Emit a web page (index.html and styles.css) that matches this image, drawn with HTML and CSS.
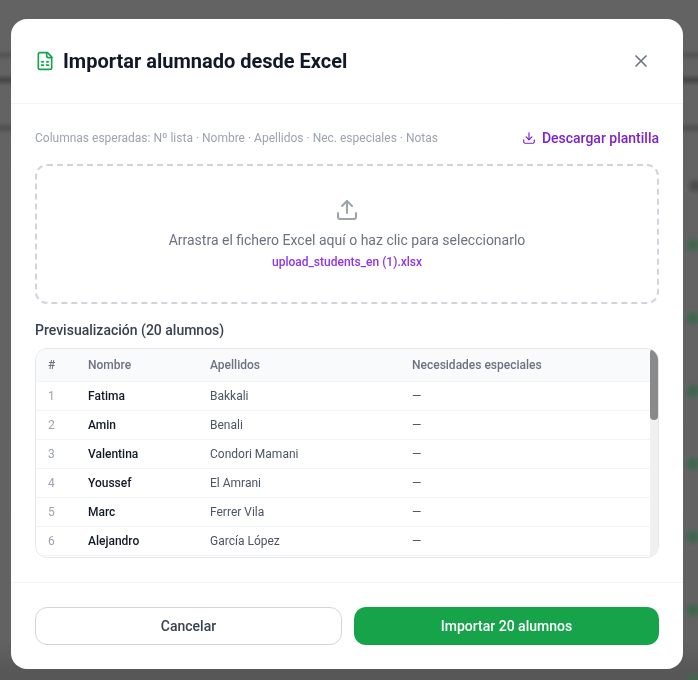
FILE: index.html
```html
<!DOCTYPE html>
<html lang="es">
<head>
    <meta charset="UTF-8">
    <meta name="viewport" content="width=device-width, initial-scale=1.0">
    <title>Importar alumnado</title>
    <link rel="stylesheet" href="styles.css">
</head>
<body>
    <div class="backdrop">
        <div class="modal">
            <div class="modal-header">
                <div class="modal-title">
                    <svg class="title-icon" width="20" height="20" viewBox="0 0 24 24" fill="none" stroke="#16a34a" stroke-width="2" stroke-linecap="round" stroke-linejoin="round">
                        <path d="M15 2H6a2 2 0 0 0-2 2v16a2 2 0 0 0 2 2h12a2 2 0 0 0 2-2V7z"/>
                        <path d="M14 2v4a2 2 0 0 0 2 2h4"/>
                        <path d="M8 13h2"/><path d="M14 13h2"/><path d="M8 17h2"/><path d="M14 17h2"/>
                    </svg>
                    <h2>Importar alumnado desde Excel</h2>
                </div>
                <button class="close-button" aria-label="Cerrar">
                    <svg width="20" height="20" viewBox="0 0 24 24" fill="none" stroke="#6b7280" stroke-width="2" stroke-linecap="round" stroke-linejoin="round">
                        <path d="M18 6 6 18"/><path d="m6 6 12 12"/>
                    </svg>
                </button>
            </div>

            <div class="modal-body">
                <div class="hint-row">
                    <span class="hint">Columnas esperadas: Nº lista · Nombre · Apellidos · Nec. especiales · Notas</span>
                    <a class="template-link" href="#">
                        <svg width="14" height="14" viewBox="0 0 24 24" fill="none" stroke="currentColor" stroke-width="2" stroke-linecap="round" stroke-linejoin="round">
                            <path d="M21 15v4a2 2 0 0 1-2 2H5a2 2 0 0 1-2-2v-4"/>
                            <path d="m7 10 5 5 5-5"/>
                            <path d="M12 15V3"/>
                        </svg>
                        Descargar plantilla
                    </a>
                </div>

                <div class="dropzone">
                    <svg width="24" height="24" viewBox="0 0 24 24" fill="none" stroke="#9ca3af" stroke-width="2" stroke-linecap="round" stroke-linejoin="round">
                        <path d="M21 15v4a2 2 0 0 1-2 2H5a2 2 0 0 1-2-2v-4"/>
                        <path d="m17 8-5-5-5 5"/>
                        <path d="M12 3v12"/>
                    </svg>
                    <p class="drop-text">Arrastra el fichero Excel aquí o haz clic para seleccionarlo</p>
                    <p class="drop-file">upload_students_en (1).xlsx</p>
                </div>

                <h3 class="preview-title">Previsualización (20 alumnos)</h3>

                <div class="table-wrap">
                    <table>
                        <thead>
                            <tr><th class="col-num">#</th><th class="col-name">Nombre</th><th class="col-last">Apellidos</th><th>Necesidades especiales</th></tr>
                        </thead>
                        <tbody>
                            <tr><td class="num">1</td><td class="name">Fatima</td><td>Bakkali</td><td>—</td></tr>
                            <tr><td class="num">2</td><td class="name">Amin</td><td>Benali</td><td>—</td></tr>
                            <tr><td class="num">3</td><td class="name">Valentina</td><td>Condori Mamani</td><td>—</td></tr>
                            <tr><td class="num">4</td><td class="name">Youssef</td><td>El Amrani</td><td>—</td></tr>
                            <tr><td class="num">5</td><td class="name">Marc</td><td>Ferrer Vila</td><td>—</td></tr>
                            <tr><td class="num">6</td><td class="name">Alejandro</td><td>García López</td><td>—</td></tr>
                        </tbody>
                    </table>
                    <div class="scrollbar"><div class="scrollbar-thumb"></div></div>
                </div>
            </div>

            <div class="modal-footer">
                <button class="btn btn-cancel">Cancelar</button>
                <button class="btn btn-import">Importar 20 alumnos</button>
            </div>
        </div>
    </div>
</body>
</html>
```

FILE: styles.css
```css
* {
    box-sizing: border-box;
}

body {
    margin: 0;
    height: 680px;
    overflow: hidden;
    font-family: 'Roboto', 'Liberation Sans', sans-serif;
    background: #5e5e5e;
}

/* the blurred page behind the dialog: header bands, then the row of green dots on the right */
.backdrop {
    height: 680px;
    padding: 19px 15px 11px 11px;
    background:
        radial-gradient(circle 9px at 693px 245px, #3f664d 25%, transparent),
        radial-gradient(circle 9px at 693px 318px, #3f664d 25%, transparent),
        radial-gradient(circle 9px at 693px 391px, #3f664d 25%, transparent),
        radial-gradient(circle 9px at 693px 464px, #3f664d 25%, transparent),
        radial-gradient(circle 9px at 693px 537px, #3f664d 25%, transparent),
        radial-gradient(circle 9px at 693px 610px, #3f664d 25%, transparent),
        radial-gradient(circle 9px at 693px 680px, #3f664d 25%, transparent),
        radial-gradient(circle 9px at 695px 186px, #4c4c4c 25%, transparent),
        linear-gradient(180deg, transparent 50px, #555 55px, transparent 61px, transparent 74px, #464646 80px, transparent 86px, transparent 122px, #505050 128px, transparent 134px),
        linear-gradient(180deg, #636363 0, #626262 640px, #575757 672px);
}

.modal {
    display: flex;
    flex-direction: column;
    width: 672px;
    height: 650px;
    background: #fff;
    border-radius: 16px;
    overflow: hidden;
    will-change: transform;
}

.modal-header {
    display: flex;
    justify-content: space-between;
    align-items: center;
    height: 85px;
    padding: 0 24px;
    border-bottom: 1px solid #f3f4f6;
}

.modal-title {
    display: flex;
    align-items: center;
    gap: 8px;
}

.title-icon {
    flex: none;
}

h2 {
    margin: 0;
    font-size: 20px;
    font-weight: 700;
    color: #111827;
}

.close-button {
    display: flex;
    padding: 8px;
    border: none;
    background: none;
}

.modal-body {
    flex: 1;
    padding: 24px 24px 0;
    min-height: 0;
}

.hint-row {
    display: flex;
    justify-content: space-between;
    align-items: center;
    height: 20px;
    margin-bottom: 16px;
}

.hint {
    font-size: 12px;
    color: #9ca3af;
}

.template-link {
    display: flex;
    align-items: center;
    gap: 6px;
    font-size: 14px;
    font-weight: 500;
    color: #7e22ce;
    text-decoration: none;
}

.dropzone {
    display: flex;
    flex-direction: column;
    align-items: center;
    height: 140px;
    padding-top: 32px;
    border: 2px dashed #d1d5db;
    border-radius: 12px;
}

.drop-text {
    margin: 8px 0 0;
    font-size: 14px;
    line-height: 20px;
    color: #6b7280;
}

.drop-file {
    margin: 4px 0 0;
    font-size: 12px;
    line-height: 16px;
    font-weight: 500;
    color: #9333ea;
}

.preview-title {
    margin: 16px 0 8px;
    font-size: 14px;
    line-height: 20px;
    font-weight: 500;
    color: #374151;
}

.table-wrap {
    position: relative;
    height: 210px;
    border: 1px solid #e5e7eb;
    border-radius: 12px;
    overflow: hidden;
}

table {
    width: 100%;
    border-collapse: collapse;
    font-size: 12px;
}

th {
    height: 32px;
    padding: 1px 12px 0;
    text-align: left;
    font-weight: 500;
    color: #6b7280;
    background: #f9fafb;
    border-bottom: 1px solid #f3f4f6;
}

td {
    height: 29px;
    padding: 0 12px;
    color: #4b5563;
    border-bottom: 1px solid #f3f4f6;
}

.col-num {
    width: 40px;
}

.col-name {
    width: 122px;
}

.col-last {
    width: 202px;
}

.num {
    color: #9ca3af;
}

.name {
    font-weight: 500;
    color: #111827;
}

.scrollbar {
    position: absolute;
    top: 0;
    right: 0;
    bottom: 0;
    width: 8px;
    background: #f0f0f0;
}

.scrollbar-thumb {
    height: 71px;
    background: #8a8a8a;
    border-radius: 4px;
}

.modal-footer {
    display: flex;
    gap: 12px;
    height: 87px;
    padding: 24px 24px 0;
    border-top: 1px solid #f3f4f6;
}

.btn {
    flex: 1;
    height: 38px;
    font-family: inherit;
    font-size: 14px;
    font-weight: 500;
    border-radius: 12px;
}

.btn-cancel {
    background: #fff;
    color: #374151;
    border: 1px solid #d1d5db;
}

.btn-import {
    background: #16a34a;
    color: #fff;
    border: none;
}
```
